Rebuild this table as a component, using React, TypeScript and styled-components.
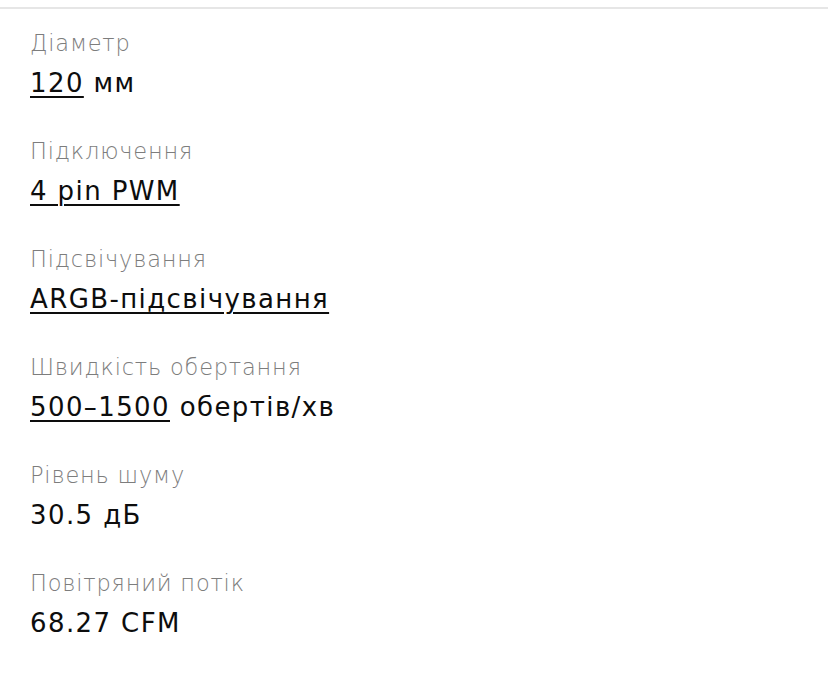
import styled, { createGlobalStyle } from 'styled-components';

const Global = createGlobalStyle`
    body {
        margin: 0;
        background: #fff;
        font-family: "DejaVu Sans", "Noto Sans", sans-serif;
    }
`;

const Body = styled.div`
    display: flex;
    flex-direction: column;
    width: 828px;
    padding-top: 7px;
`;

const Divider = styled.div`
    height: 2px;
    background: #e6e6e6;
`;

const List = styled.dl`
    display: flex;
    flex-direction: column;
    gap: 40px;
    margin: 0;
    padding: 20px 30px;
`;

const Spec = styled.div`
    display: flex;
    flex-direction: column;
    gap: 12px;
`;

const Label = styled.dt`
    font-size: 22.5px;
    line-height: 28px;
    font-weight: 300;
    letter-spacing: 0.8px;
    color: #7d7d7d;
`;

const Value = styled.dd`
    margin: 0;
    font-size: 26px;
    line-height: 28px;
    letter-spacing: 1.4px;
    color: #0d0d0d;
`;

const Link = styled.a`
    color: #0d0d0d;
    text-decoration: underline;
    text-underline-offset: 4px;
    text-decoration-thickness: 1.5px;
`;

const specs = [
    { label: 'Діаметр', link: '120', rest: ' мм' },
    { label: 'Підключення', link: '4 pin PWM', rest: '' },
    { label: 'Підсвічування', link: 'ARGB-підсвічування', rest: '' },
    { label: 'Швидкість обертання', link: '500–1500', rest: ' обертів/хв' },
    { label: 'Рівень шуму', link: '', rest: '30.5 дБ' },
    { label: 'Повітряний потік', link: '', rest: '68.27 CFM' },
];

const App = () => {
    return (
        <Body>
            <Global />
            <Divider />
            <List>
                {specs.map((s) => (
                    <Spec key={s.label}>
                        <Label>{s.label}</Label>
                        <Value>
                            {s.link && <Link href="#">{s.link}</Link>}
                            {s.rest}
                        </Value>
                    </Spec>
                ))}
            </List>
        </Body>
    );
};

export default App;
